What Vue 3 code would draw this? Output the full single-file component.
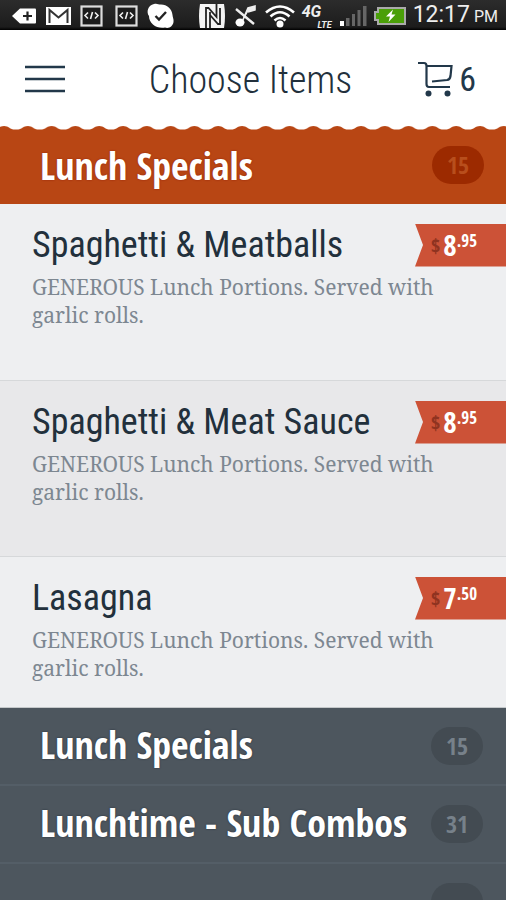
<script setup>
const items = [
  {
    name: 'Spaghetti & Meatballs',
    description: 'GENEROUS Lunch Portions. Served with garlic rolls.',
    dollars: '8',
    cents: '.95'
  },
  {
    name: 'Spaghetti & Meat Sauce',
    description: 'GENEROUS Lunch Portions. Served with garlic rolls.',
    dollars: '8',
    cents: '.95'
  },
  {
    name: 'Lasagna',
    description: 'GENEROUS Lunch Portions. Served with garlic rolls.',
    dollars: '7',
    cents: '.50'
  }
]

const categories = [
  { name: 'Lunch Specials', count: 15 },
  { name: 'Lunchtime - Sub Combos', count: 31 },
  { name: '', count: '' }
]
</script>

<template>
  <div class="screen">
    <div class="status-bar">
      <div class="status-icons">
        <svg width="26" height="20" viewBox="0 0 26 20">
          <path d="M1 10 L9 2.500 H24 a1 1 0 0 1 1 1 V16.500 a1 1 0 0 1 -1 1 H9 Z" fill="#fff" />
          <path d="M16.500 5.500 V14.500 M12 10 H21" stroke="#222" stroke-width="2.200" />
        </svg>
        <svg width="27" height="20" viewBox="0 0 27 20">
          <rect x="1" y="1" width="25" height="18" fill="#fff" />
          <path d="M4.500 17 V4 L13.500 11.500 L22.500 4 V17" fill="none" stroke="#333" stroke-width="2" />
        </svg>
        <svg v-for="n in 2" :key="n" class="code-icon" width="23" height="22" viewBox="0 0 23 22">
          <rect x="1.500" y="1.500" width="20" height="19" fill="#1c1c1c" stroke="#ddd" stroke-width="2.200" />
          <path d="M8 7.500 L5 10.500 L8 13.500 M15 7.500 L18 10.500 L15 13.500 M12.500 7 L10.500 14" fill="none" stroke="#eee" stroke-width="1.600" />
        </svg>
        <svg width="29" height="26" viewBox="0 0 29 26">
          <path d="M8 1 C11 0 12 1.500 15 1.500 C21 1.500 26 6 26.500 12 C26.500 14 28 16 27.500 19 C27 23 23 26 19 24.500 C11 26 3 21 3 13 C0 9 2 2 8 1 Z" fill="#fff" />
          <path d="M9.500 13 L13 16.500 L20 9" fill="none" stroke="#222" stroke-width="2.400" />
        </svg>
      </div>
      <div class="status-icons status-right">
        <svg width="28" height="26" viewBox="0 0 28 26">
          <path d="M2 1 H26 Q28 13 26 25 H2 Q0 13 2 1 Z" fill="#f4f4f4" />
          <path d="M8 25 V5 H10.500 L18.500 14 V1" fill="none" stroke="#222" stroke-width="1.800" />
          <path d="M12 9 V25 M12 12 L20 21 H22 V5" fill="none" stroke="#222" stroke-width="1.800" />
        </svg>
        <svg class="muted" width="22" height="24" viewBox="0 0 22 24">
          <path d="M2 5 L20 20" stroke="#eee" stroke-width="2.400" />
          <path d="M8 18 L14 4 L21 2 V6 L14 8" fill="#eee" stroke="#eee" stroke-width="1.600" />
          <ellipse cx="6" cy="18.500" rx="4.500" ry="4" fill="#fff" />
        </svg>
        <svg width="32" height="24" viewBox="0 0 32 24">
          <path d="M2 8.500 Q16 -3.500 30 8.500 M6.500 12.500 Q16 4 25.500 12.500 M10.500 16.500 Q16 11.500 21.500 16.500" fill="none" stroke="#fff" stroke-width="2.600" />
          <circle cx="16" cy="20" r="3.500" fill="#fff" />
        </svg>
        <div class="network">
          <span class="network-4g">4G</span>
          <span class="network-lte">LTE</span>
        </div>
        <svg width="27" height="20" viewBox="0 0 27 20">
          <rect x="0" y="15" width="4" height="5" fill="#fff" />
          <path d="M6 12 H9.500 V20 H6 Z M12 8 H15 V20 H12 Z M17.500 4 H20.500 V20 H17.500 Z M23 0 H26.500 V20 H23 Z" fill="#666" />
        </svg>
        <svg width="34" height="18" viewBox="0 0 34 18">
          <path d="M5 1 H32 V17 H5 V13 H2 V5 H5 Z" fill="#4a9f08" stroke="#aaa" stroke-width="2" />
          <path d="M20 2.500 L13 9.500 H17 L15.500 15 L22.500 7.500 H18.500 Z" fill="#fff" />
        </svg>
        <span class="clock">12:17<small>PM</small></span>
      </div>
    </div>

    <header class="header">
      <button type="button" class="icon-button" aria-label="Menu">
        <svg width="40" height="28" viewBox="0 0 40 28">
          <path d="M0 2 H40 M0 14 H40 M0 26 H40" stroke="#22384a" stroke-width="2.600" />
        </svg>
      </button>
      <h1 class="title">Choose Items</h1>
      <button type="button" class="icon-button cart" aria-label="Cart, 6 items">
        <svg width="35" height="36" viewBox="0 0 35 36" fill="none" stroke="#22384a" stroke-width="2.200">
          <path d="M0 2 H6 Q8.500 2 8.500 5 V23 Q8.500 26 11 26 H32" />
          <path d="M8.500 5 H33.500 L32.500 15 Q32 18.500 29 19 L14 20.500" />
          <circle cx="10.500" cy="32.500" r="3" fill="#22384a" stroke="none" />
          <circle cx="29.500" cy="32.500" r="3" fill="#22384a" stroke="none" />
        </svg>
        <span>6</span>
      </button>
    </header>

    <main>
      <section>
        <div class="section-head">
          <svg class="scallops" width="100%" height="4" aria-hidden="true">
            <defs>
              <pattern id="scallop" width="23.800" height="4" patternUnits="userSpaceOnUse" x="-8">
                <path d="M0 0 H23.800 V3.500 C18 4 17 0 12 0 C7 0 6 4 0 3.500 Z" fill="#fff" />
              </pattern>
            </defs>
            <rect width="100%" height="4" fill="url(#scallop)" />
          </svg>
          <h2>Lunch Specials</h2>
          <span class="count">15</span>
        </div>
        <ul class="items">
          <li v-for="item in items" :key="item.name" class="item">
            <div class="item-top">
              <h3>{{ item.name }}</h3>
              <div class="price">
                <span class="currency">$</span>
                <span class="dollars">{{ item.dollars }}</span>
                <span class="cents">{{ item.cents }}</span>
              </div>
            </div>
            <p>{{ item.description }}</p>
          </li>
        </ul>
      </section>

      <nav class="categories">
        <a v-for="(category, i) in categories" :key="i" href="#" class="category">
          <span>{{ category.name }}</span>
          <span class="count">{{ category.count }}</span>
        </a>
      </nav>
    </main>
  </div>
</template>

<style>
body {
  background: #4d565e;
}
</style>

<style scoped>
.screen {
  height: 100vh;
  overflow: hidden;
  font-family: 'Open Sans Condensed', 'Roboto Condensed', sans-serif;
  color: #22303c;
}

.status-bar {
  display: flex;
  align-items: center;
  justify-content: space-between;
  height: 30px;
  box-sizing: border-box;
  padding: 2px 8px 0 11px;
  background: linear-gradient(#2c2c2c, #1c1c1c 90%, #000);
  color: #eee;
}

.status-icons {
  display: flex;
  align-items: center;
  gap: 8px;
}

.status-right {
  gap: 6px;
}

.code-icon + .code-icon {
  margin-left: 4px;
}

.muted {
  margin: 0 2px;
}

.network {
  display: flex;
  flex-direction: column;
  width: 32px;
  font: italic bold 16px/17px Roboto, sans-serif;
}

.network-lte {
  align-self: flex-end;
  padding-right: 2px;
  font-size: 9px;
  line-height: 10px;
}

.clock {
  font: 23px/28px Roboto, sans-serif;
}

.clock small {
  margin-left: 4px;
  font-size: 16px;
}

.header {
  display: grid;
  grid-template-columns: 1fr auto 1fr;
  align-items: center;
  height: 94px;
  padding: 2px 30px 0 25px;
  background: #fff;
}

.icon-button {
  display: flex;
  align-items: center;
  padding: 0;
  border: 0;
  background: none;
  color: #22384a;
  cursor: pointer;
}

.cart {
  justify-self: end;
  gap: 6px;
  font: 34px/40px 'Roboto Condensed', sans-serif;
}

.title {
  margin: 0;
  padding-top: 2px;
  font: 300 38px/48px 'Roboto Condensed', sans-serif;
}

.section-head {
  position: relative;
  display: flex;
  align-items: center;
  justify-content: space-between;
  height: 78px;
  padding-right: 22px;
  background: #b84614;
  color: #fff;
}

.scallops {
  position: absolute;
  top: 0;
  left: 0;
}

.section-head h2,
.category span:first-child {
  margin: 0;
  padding-left: 40px;
  font-size: 38px;
  font-weight: 700;
  line-height: 48px;
}

.section-head h2 {
  text-shadow: 0 0 2px #90200a;
}

.count {
  min-width: 52px;
  height: 38px;
  border-radius: 19px;
  background: #434b52;
  color: #77818a;
  font-size: 24px;
  font-weight: 700;
  line-height: 38px;
  text-align: center;
}

.section-head .count {
  background: #9c2a00;
  color: #b84e1c;
}

.items {
  margin: 0;
  padding: 0;
  list-style: none;
}

.item {
  box-sizing: border-box;
  min-height: 177px;
  padding: 18px 0 0 32px;
  border-bottom: 1px solid #d6d8da;
  background: #eeeff1;
}

.item:nth-child(even) {
  min-height: 176px;
  background: #e8e8ea;
}

.item:last-child {
  min-height: 151px;
  border-bottom: 1px solid #c4c8ca;
}

.item-top {
  display: flex;
  justify-content: space-between;
  align-items: center;
}

.item h3 {
  margin: 0;
  font: 400 36px/46px 'Roboto Condensed', sans-serif;
}

.item p {
  margin: 5px 56px 0 0;
  color: #7d8791;
  font: 21px/28px 'Noto Serif', serif;
}

.price {
  display: flex;
  align-items: center;
  width: 75px;
  height: 43px;
  padding-left: 16px;
  background: #cc5237;
  clip-path: polygon(0 0, 100% 0, 100% 100%, 0 100%, 8px 50%);
  color: #fff;
  font-weight: 700;
}

.currency {
  margin-right: 3px;
  color: #8f3320;
  font-size: 20px;
}

.dollars {
  font-size: 29px;
  line-height: 40px;
}

.cents {
  align-self: flex-start;
  font-size: 17px;
  line-height: 34px;
}

.category {
  box-sizing: border-box;
  display: flex;
  align-items: center;
  justify-content: space-between;
  height: 78px;
  padding-right: 23px;
  border-bottom: 2px solid #545e67;
  background: #4d565e;
  color: #fff;
  text-decoration: none;
}

.category span:first-child {
  padding-bottom: 4px;
  text-shadow: 0 0 2px #222c38;
}
</style>
